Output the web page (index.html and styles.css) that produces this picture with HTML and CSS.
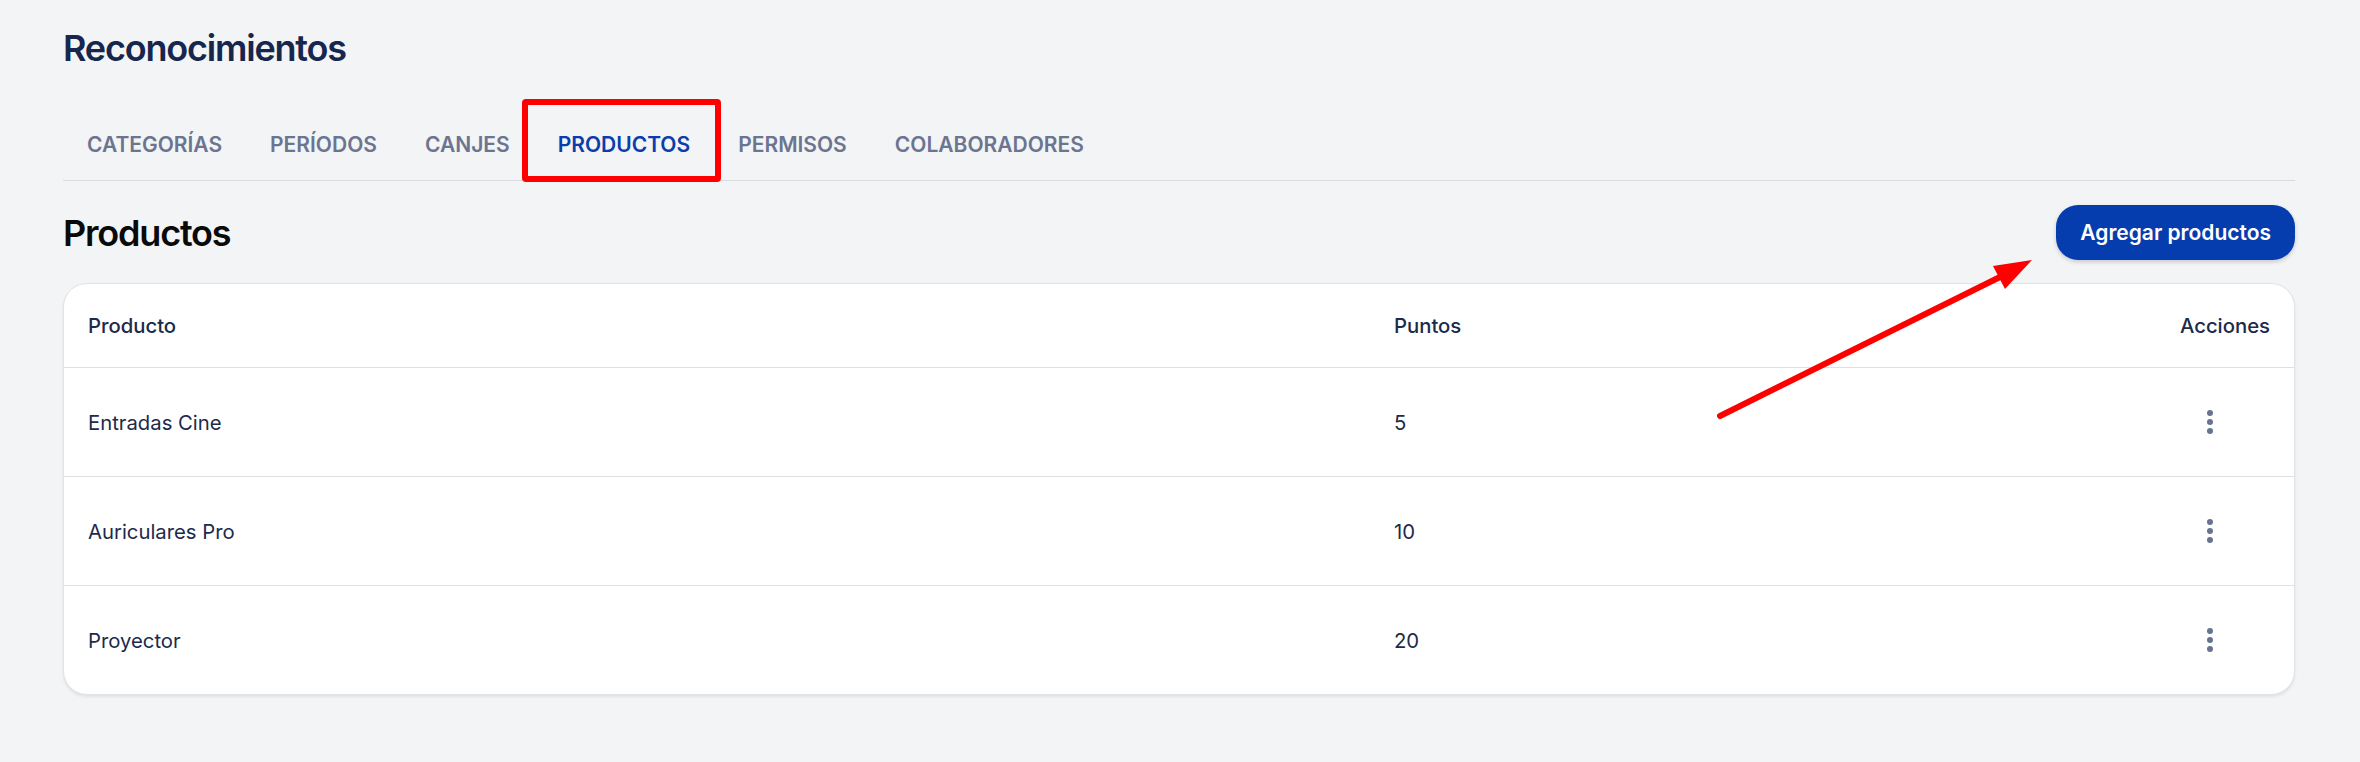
FILE: index.html
```html
<!DOCTYPE html>
<html lang="es">
<head>
<meta charset="utf-8">
<title>Reconocimientos</title>
<link rel="stylesheet" href="styles.css">
</head>
<body>
<div class="page">
  <h1 class="title">Reconocimientos</h1>
  <nav class="tabs">
    <div class="tab">CATEGORÍAS</div>
    <div class="tab">PERÍODOS</div>
    <div class="tab">CANJES</div>
    <div class="tab active">PRODUCTOS<span class="highlight"></span></div>
    <div class="tab">PERMISOS</div>
    <div class="tab">COLABORADORES</div>
  </nav>
  <div class="section-head">
    <h2 class="section-title">Productos</h2>
    <button class="btn-primary">Agregar productos</button>
  </div>
  <div class="card">
    <div class="row head">
      <div class="cell">Producto</div>
      <div class="cell">Puntos</div>
      <div class="cell right">Acciones</div>
    </div>
    <div class="row">
      <div class="cell">Entradas Cine</div>
      <div class="cell">5</div>
      <div class="cell center"><span class="dots"><i></i><i></i><i></i></span></div>
    </div>
    <div class="row">
      <div class="cell">Auriculares Pro</div>
      <div class="cell">10</div>
      <div class="cell center"><span class="dots"><i></i><i></i><i></i></span></div>
    </div>
    <div class="row">
      <div class="cell">Proyector</div>
      <div class="cell">20</div>
      <div class="cell center"><span class="dots"><i></i><i></i><i></i></span></div>
    </div>
  </div>
</div>
<svg class="arrow" width="2360" height="762" viewBox="0 0 2360 762">
  <line x1="1720" y1="416" x2="2006" y2="274" stroke="#ff0000" stroke-width="6" stroke-linecap="round"/>
  <polygon points="2032,260 1993,266 2005,289" fill="#ff0000"/>
</svg>
</body>
</html>
```

FILE: styles.css
```css
html, body {
  margin: 0;
  padding: 0;
}
body {
  background: #f3f4f6;
  font-family: Inter, "Noto Sans", sans-serif;
  position: relative;
  width: 2360px;
  height: 762px;
  overflow: hidden;
}
.page {
  padding: 24px 65px 0 63px;
}
.title {
  margin: 0;
  font-size: 36px;
  line-height: 48px;
  font-weight: 600;
  color: #16264d;
  letter-spacing: -1.2px;
}
.tabs {
  display: flex;
  margin-top: 36px;
  border-bottom: 1px solid #d9dbe0;
}
.tab {
  position: relative;
  height: 72px;
  padding: 0 24px;
  display: flex;
  align-items: center;
  font-size: 21px;
  font-weight: 600;
  color: #6b7590;
}
.tab.active {
  color: #0a3dae;
}
.highlight {
  position: absolute;
  left: -12px;
  right: -7px;
  top: -9px;
  bottom: -2px;
  border: 6px solid #ff0000;
  border-radius: 4px;
}
.section-head {
  display: flex;
  align-items: center;
  justify-content: space-between;
  margin-top: 24px;
}
.section-title {
  margin: 0;
  font-size: 36px;
  line-height: 48px;
  font-weight: 600;
  color: #0a0a0a;
  letter-spacing: -1.2px;
}
.btn-primary {
  height: 55px;
  padding: 0 24px;
  border: none;
  border-radius: 22px;
  background: #053dae;
  color: #ffffff;
  font-family: Inter, "Noto Sans", sans-serif;
  font-size: 21px;
  font-weight: 600;
  box-shadow: 0 2px 4px rgba(0, 0, 0, 0.18);
}
.card {
  margin-top: 23px;
  background: #ffffff;
  border: 1px solid #e2e3e6;
  border-radius: 24px;
  box-shadow: 0 2px 3px rgba(0, 0, 0, 0.08);
  overflow: hidden;
}
.row {
  display: grid;
  grid-template-columns: 1306px 1fr 168px;
  height: 108px;
  border-top: 1px solid #e0e0e0;
  font-size: 20.3px;
  color: #1c2a4b;
}
.row.head {
  height: 83px;
  border-top: none;
  font-weight: 450;
}
.cell {
  display: flex;
  align-items: center;
  padding: 0 24px;
}
.cell.right {
  justify-content: flex-end;
}
.cell.center {
  justify-content: center;
  padding: 0;
}
.dots {
  display: flex;
  flex-direction: column;
  gap: 3px;
}
.dots i {
  display: block;
  width: 6px;
  height: 6px;
  border-radius: 50%;
  background: #66748f;
}
.arrow {
  position: absolute;
  left: 0;
  top: 0;
  pointer-events: none;
}
```
